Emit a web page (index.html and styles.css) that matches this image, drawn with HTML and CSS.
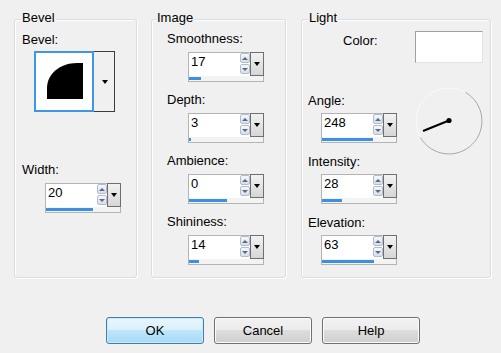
FILE: index.html
```html
<!DOCTYPE html>
<html>
<head>
    <title>Inner Bevel</title>
    <link rel="stylesheet" href="styles.css">
</head>
<body>
    <div class="dialog">
        <div class="groups">
            <!-- Bevel -->
            <div class="group bevel">
                <span class="legend">Bevel</span>
                <div class="lbl">Bevel:</div>
                <div class="bevel-pick">
                    <div class="bevel-preview">
                        <svg width="56" height="57" viewBox="0 0 56 57">
                            <path d="M11 46 V35 C11 21 24 10 41 10 H47 V46 Z" fill="#000"/>
                        </svg>
                    </div>
                    <div class="bevel-drop"><span class="tri"></span></div>
                </div>
                <div class="lbl width-lbl">Width:</div>
                <div class="spin">
                    <div class="spin-row">
                        <span class="spin-val">20</span>
                        <span class="spin-btns"><span class="spin-up"></span><span class="spin-down"></span></span>
                        <span class="spin-drop"><span class="tri"></span></span>
                    </div>
                    <div class="spin-bar"><div class="spin-fill" style="width:64%"></div></div>
                </div>
            </div>

            <!-- Image -->
            <div class="group image">
                <span class="legend">Image</span>
                <div class="field">
                    <div class="lbl">Smoothness:</div>
                    <div class="spin">
                        <div class="spin-row">
                            <span class="spin-val">17</span>
                            <span class="spin-btns"><span class="spin-up"></span><span class="spin-down"></span></span>
                            <span class="spin-drop"><span class="tri"></span></span>
                        </div>
                        <div class="spin-bar"><div class="spin-fill" style="width:16%"></div></div>
                    </div>
                </div>
                <div class="field">
                    <div class="lbl">Depth:</div>
                    <div class="spin">
                        <div class="spin-row">
                            <span class="spin-val">3</span>
                            <span class="spin-btns"><span class="spin-up"></span><span class="spin-down"></span></span>
                            <span class="spin-drop"><span class="tri"></span></span>
                        </div>
                        <div class="spin-bar"><div class="spin-fill" style="width:2px"></div></div>
                    </div>
                </div>
                <div class="field">
                    <div class="lbl">Ambience:</div>
                    <div class="spin">
                        <div class="spin-row">
                            <span class="spin-val">0</span>
                            <span class="spin-btns"><span class="spin-up"></span><span class="spin-down"></span></span>
                            <span class="spin-drop"><span class="tri"></span></span>
                        </div>
                        <div class="spin-bar"><div class="spin-fill" style="width:51%"></div></div>
                    </div>
                </div>
                <div class="field">
                    <div class="lbl">Shininess:</div>
                    <div class="spin">
                        <div class="spin-row">
                            <span class="spin-val">14</span>
                            <span class="spin-btns"><span class="spin-up"></span><span class="spin-down"></span></span>
                            <span class="spin-drop"><span class="tri"></span></span>
                        </div>
                        <div class="spin-bar"><div class="spin-fill" style="width:14%"></div></div>
                    </div>
                </div>
            </div>

            <!-- Light -->
            <div class="group light">
                <span class="legend">Light</span>
                <div class="color-row">
                    <span class="color-lbl">Color:</span>
                    <span class="swatch"></span>
                </div>
                <div class="angle-row">
                    <div class="angle-col">
                        <div class="lbl">Angle:</div>
                        <div class="spin">
                            <div class="spin-row">
                                <span class="spin-val">248</span>
                                <span class="spin-btns"><span class="spin-up"></span><span class="spin-down"></span></span>
                                <span class="spin-drop"><span class="tri"></span></span>
                            </div>
                            <div class="spin-bar"><div class="spin-fill" style="width:69%"></div></div>
                        </div>
                    </div>
                    <svg class="dial" width="68" height="68" viewBox="0 0 68 68">
                        <circle cx="34" cy="34" r="33" fill="none" stroke="#fafafa" stroke-width="1"/>
                        <path d="M50.5 5.4 A33 33 0 1 1 5.4 50.5" fill="none" stroke="#a5a5a5" stroke-width="1"/>
                        <line x1="8" y1="44" x2="34" y2="33.5" stroke="#000" stroke-width="2"/>
                        <circle cx="34" cy="33.5" r="2.6" fill="#000"/>
                    </svg>
                </div>
                <div class="field">
                    <div class="lbl">Intensity:</div>
                    <div class="spin">
                        <div class="spin-row">
                            <span class="spin-val">28</span>
                            <span class="spin-btns"><span class="spin-up"></span><span class="spin-down"></span></span>
                            <span class="spin-drop"><span class="tri"></span></span>
                        </div>
                        <div class="spin-bar"><div class="spin-fill" style="width:27%"></div></div>
                    </div>
                </div>
                <div class="field">
                    <div class="lbl">Elevation:</div>
                    <div class="spin">
                        <div class="spin-row">
                            <span class="spin-val">63</span>
                            <span class="spin-btns"><span class="spin-up"></span><span class="spin-down"></span></span>
                            <span class="spin-drop"><span class="tri"></span></span>
                        </div>
                        <div class="spin-bar"><div class="spin-fill" style="width:70%"></div></div>
                    </div>
                </div>
            </div>
        </div>

        <div class="buttons">
            <button class="btn default">OK</button>
            <button class="btn">Cancel</button>
            <button class="btn">Help</button>
        </div>
    </div>
</body>
</html>
```

FILE: styles.css
```css
/* General */
body {
    margin: 0;
    background: #f0f0f0;
    font-family: "Liberation Sans", Arial, sans-serif;
    font-size: 13px;
    line-height: 15px;
    color: #000;
}
.groups {
    display: flex;
    padding: 19px 0 0 14px;
}

/* Group boxes */
.group {
    position: relative;
    box-sizing: border-box;
    height: 259px;
    display: flex;
    flex-direction: column;
    align-items: flex-start;
    border: 1px solid #d5dfe5;
    border-radius: 3px;
    box-shadow: 1px 1px 0 #fff, inset 1px 1px 0 #fff;
}
.legend {
    position: absolute;
    top: -10px;
    left: 6px;
    padding: 0 1px;
    background: #f0f0f0;
}
.bevel { width: 123px; padding-top: 12px; }
.image { width: 135px; padding-top: 11px; margin-left: 14px; }
.light { width: 190px; padding-top: 11px; margin-left: 15px; }
.image .legend { left: 4px; }

.field { display: flex; flex-direction: column; align-items: flex-start; }
.image .field + .field { margin-top: 10px; }
.light .field { margin-top: 11px; }

.bevel .lbl { margin-left: 7px; }
.image .lbl { margin-left: 15px; }
.light .lbl { margin-left: 6px; }

.lbl + .spin { margin-top: 6px; }
.light .lbl + .spin { margin-top: 5px; }
.bevel .spin { margin-left: 30px; }
.image .spin { margin-left: 36px; }
.light .spin { margin-left: 19px; }

/* Bevel picker */
.bevel-pick {
    display: flex;
    width: 81px;
    height: 61px;
    margin: 4px 0 0 19px;
}
.bevel-preview {
    box-sizing: border-box;
    width: 60px;
    height: 61px;
    border: 2px solid #3f95e6;
    background: #fff;
}
.bevel-preview svg { display: block; }
.bevel-drop {
    flex: 1;
    display: flex;
    align-items: center;
    justify-content: center;
    border: 1px solid #3c3c3c;
    border-left: none;
    padding-left: 1px;
}
.width-lbl { margin-top: 50px; }

/* Spin control */
.spin {
    box-sizing: border-box;
    width: 76px;
    height: 30px;
    border: 1px solid #b4b4b4;
    background: #fff;
}
.spin-row {
    display: flex;
    height: 23px;
}
.spin-val {
    flex: 1;
    padding: 1px 0 0 2px;
}
.spin-btns {
    width: 10px;
    display: flex;
    flex-direction: column;
    gap: 1px;
}
.spin-up, .spin-down {
    box-sizing: border-box;
    height: 10px;
    border: 1px solid #b3bccb;
    border-radius: 2px;
    background: linear-gradient(#f6f8fb, #d8dee8);
    display: flex;
    align-items: center;
    justify-content: center;
}
.spin-up::after, .spin-down::after {
    content: "";
    border-left: 3px solid transparent;
    border-right: 3px solid transparent;
}
.spin-up::after { border-bottom: 3px solid #5a6a86; }
.spin-down::after { border-top: 3px solid #5a6a86; }
.spin-drop {
    box-sizing: border-box;
    width: 14px;
    height: 24px;
    margin: -1px -1px 0 0;
    border: 1px solid #6f6f6f;
    background: linear-gradient(#f2f2f2, #d6d6d6);
    display: flex;
    align-items: center;
    justify-content: center;
}
.tri {
    width: 0;
    height: 0;
    border-left: 3.5px solid transparent;
    border-right: 3.5px solid transparent;
    border-top: 4px solid #000;
}
.spin-bar {
    box-sizing: border-box;
    height: 5px;
    padding: 1px 0;
    background: #f3f3f3;
}
.spin-fill {
    height: 3px;
    background: #3d8fe2;
}

/* Light group */
.color-row {
    display: flex;
    align-self: stretch;
    align-items: flex-start;
}
.color-lbl { margin: 2px 0 0 41px; }
.swatch {
    box-sizing: border-box;
    width: 68px;
    height: 32px;
    margin: 0 7px 0 auto;
    background: #fff;
    border: 1px solid #e3e3e3;
    border-top-color: #a0a0a0;
    border-left-color: #a0a0a0;
}
.angle-row {
    display: flex;
    align-items: flex-start;
    margin-top: 30px;
}
.angle-col { display: flex; flex-direction: column; align-items: flex-start; }
.dial {
    display: block;
    margin: -6px 0 -13px 18px;
}

/* Buttons */
.buttons {
    display: flex;
    gap: 10px;
    padding-left: 106px;
    margin-top: 39px;
}
.btn {
    box-sizing: border-box;
    width: 98px;
    height: 27px;
    padding: 0;
    font-family: "Liberation Sans", Arial, sans-serif;
    font-size: 13px;
    color: #000;
    border: 1px solid #707070;
    border-radius: 3px;
    background: linear-gradient(#f2f2f2 0%, #ebebeb 50%, #dddddd 50%, #cfcfcf 100%);
    box-shadow: inset 0 0 0 1px #fcfcfc;
}
.btn.default {
    border-color: #3c7fb1;
    background: linear-gradient(#eaf6fd 0%, #d9f0fc 50%, #bee6fd 50%, #a7d9f5 100%);
    box-shadow: inset 0 0 0 1px #cdeafb;
}
```
